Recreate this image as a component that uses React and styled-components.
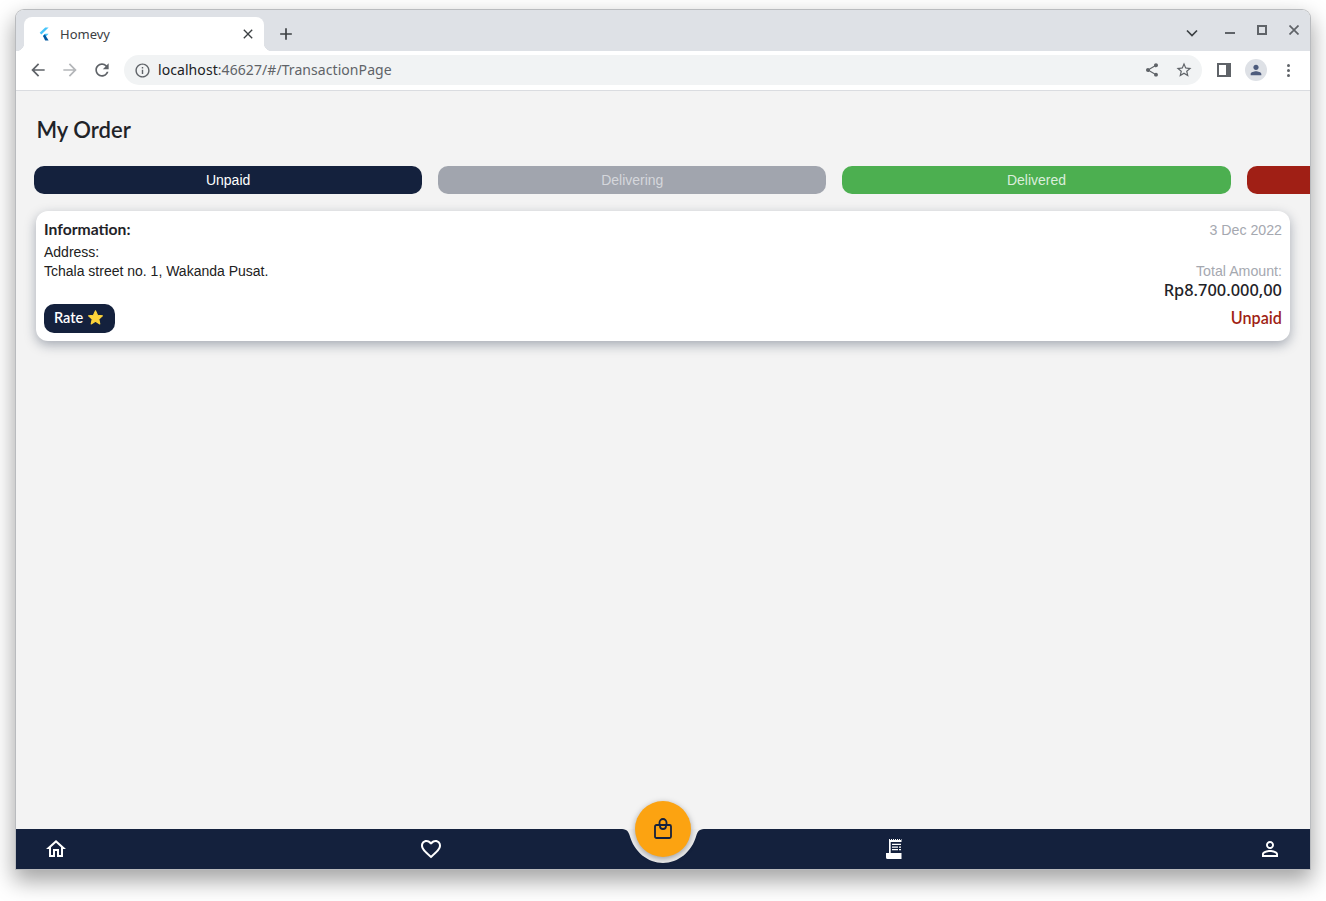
import React from 'react';
import styled, { createGlobalStyle } from 'styled-components';

const GlobalStyle = createGlobalStyle`
  html, body {
    margin: 0;
    padding: 0;
    background: #ffffff;
  }
  * {
    box-sizing: border-box;
  }
`;

const NAVY = '#14213d';
const UI_FONT = '"Noto Sans", sans-serif';
const APP_FONT = '"Liberation Sans", sans-serif';
const HEAD_FONT = 'Lato, sans-serif';

const paths = {
  back: 'M20 11H7.83l5.59-5.59L12 4l-8 8 8 8 1.41-1.41L7.83 13H20v-2z',
  forward: 'M12 4l-1.41 1.41L16.17 11H4v2h12.17l-5.58 5.59L12 20l8-8z',
  reload:
    'M17.65 6.35C16.2 4.9 14.21 4 12 4c-4.42 0-7.99 3.58-7.99 8s3.57 8 7.99 8c3.73 0 6.84-2.55 7.73-6h-2.08c-.82 2.33-3.04 4-5.65 4-3.31 0-6-2.69-6-6s2.69-6 6-6c1.66 0 3.14.69 4.22 1.78L13 11h7V4l-2.35 2.35z',
  info: 'M11 7h2v2h-2zm0 4h2v6h-2zm1-9C6.48 2 2 6.48 2 12s4.48 10 10 10 10-4.48 10-10S17.52 2 12 2zm0 18c-4.41 0-8-3.59-8-8s3.59-8 8-8 8 3.59 8 8-3.59 8-8 8z',
  share:
    'M18 16.08c-.76 0-1.44.3-1.96.77L8.91 12.7c.05-.23.09-.46.09-.7s-.04-.47-.09-.7l7.05-4.11c.54.5 1.25.81 2.04.81 1.66 0 3-1.34 3-3s-1.34-3-3-3-3 1.34-3 3c0 .24.04.47.09.7L8.04 9.81C7.5 9.31 6.79 9 6 9c-1.66 0-3 1.34-3 3s1.34 3 3 3c.79 0 1.5-.31 2.04-.81l7.12 4.16c-.05.21-.08.43-.08.65 0 1.61 1.31 2.92 2.92 2.92s2.92-1.31 2.92-2.92-1.31-2.92-2.92-2.92z',
  star: 'M22 9.24l-7.19-.62L12 2 9.19 8.63 2 9.24l5.46 4.73L5.82 21 12 17.27 18.18 21l-1.63-7.03L22 9.24zM12 15.4l-3.76 2.27 1-4.28-3.32-2.88 4.38-.38L12 6.1l1.71 4.04 4.38.38-3.32 2.88 1 4.28L12 15.4z',
  home: 'M12 5.69l5 4.5V18h-2v-6H9v6H7v-7.81l5-4.5M12 3L2 12h3v8h6v-6h2v6h6v-8h3L12 3z',
  heart:
    'M16.5 3c-1.74 0-3.41.81-4.5 2.09C10.91 3.81 9.24 3 7.5 3 4.42 3 2 5.42 2 8.5c0 3.78 3.4 6.86 8.55 11.54L12 21.35l1.45-1.32C18.6 15.36 22 12.28 22 8.5 22 5.42 19.58 3 16.5 3zm-4.4 15.55l-.1.1-.1-.1C7.14 14.24 4 11.39 4 8.5 4 6.5 5.5 5 7.5 5c1.54 0 3.04.99 3.57 2.36h1.87C13.46 5.99 14.96 5 16.5 5c2 0 3.5 1.5 3.5 3.5 0 2.89-3.14 5.74-7.9 10.05z',
  person:
    'M12 5.9c1.16 0 2.1.94 2.1 2.1s-.94 2.1-2.1 2.1S9.9 9.16 9.9 8s.94-2.1 2.1-2.1m0 9c2.97 0 6.1 1.46 6.1 2.1v1.1H5.9V17c0-.64 3.13-2.1 6.1-2.1M12 4C9.79 4 8 5.79 8 8s1.79 4 4 4 4-1.79 4-4-1.79-4-4-4zm0 9c-2.67 0-8 1.34-8 4v3h16v-3c0-2.66-5.33-4-8-4z',
};

const Icon = ({ d, size = 24, color = 'currentColor' }) => (
  <svg width={size} height={size} viewBox="0 0 24 24" fill={color}>
    <path d={d} />
  </svg>
);

const FlutterLogo = () => (
  <svg width="12" height="14" viewBox="0 0 12 14">
    <path d="M7.2 0.5h3.4L3.4 7.4 1.7 5.8z" fill="#47c5fb" />
    <path d="M10.6 6.8H7.2L4.9 9l1.8 1.8z" fill="#47c5fb" />
    <path d="M5 9l1.8-1.7 3.8 6.2H7.2z" fill="#00569e" />
  </svg>
);

const BagIcon = () => (
  <svg width="24" height="24" viewBox="0 0 24 24" fill="none" stroke={NAVY} strokeWidth="1.8">
    <rect x="4" y="8" width="16" height="13" rx="1.5" />
    <path d="M8.5 8V5.500a3.500 3.500 0 0 1 7 0V8" />
    <path d="M9 9a3 3 0 0 0 6 0" />
  </svg>
);

const ReceiptIcon = () => (
  <svg width="24" height="24" viewBox="0 0 24 24">
    <path
      d="M6 2h1v1h1V2h1v1h1V2h1v1h1V2h1v1h1V2h1v1h1V2h1v1h1V2h.5v20H4.500A1.500 1.500 0 0 1 3 20.500V16h3z"
      fill="#fff"
    />
    <path d="M7.700 5h11.600v11H7.700z" fill={NAVY} />
    <path
      d="M9 6.800h9V8H9zM9 9.500h6v1.200H9zM16 9.500h2v1.200h-2zM9 12h6v1.200H9zM16 12h2v1.200h-2z"
      fill="#fff"
    />
  </svg>
);

const Page = styled.div`
  width: 1326px;
  height: 901px;
  padding: 10px 16px 32px;
  overflow: hidden;
`;

const Window = styled.div`
  height: 859px;
  display: flex;
  flex-direction: column;
  border-radius: 8px 8px 0 0;
  box-shadow: 0 0 0 1px #b9bbbe, 0 10px 22px 2px rgba(0, 0, 0, 0.36);
`;

const TabStrip = styled.div`
  height: 41px;
  flex: none;
  display: flex;
  align-items: flex-end;
  padding-left: 8px;
  background: #dee1e6;
  border-radius: 8px 8px 0 0;
`;

const Tab = styled.div`
  position: relative;
  width: 240px;
  height: 34px;
  display: flex;
  align-items: center;
  padding: 0 8px 0 14px;
  background: #ffffff;
  border-radius: 8px 8px 0 0;
  color: #3c4043;
  font: 13px/34px ${UI_FONT};

  &::before,
  &::after {
    content: '';
    position: absolute;
    bottom: 0;
    width: 8px;
    height: 8px;
  }
  &::before {
    left: -8px;
    background: radial-gradient(circle at 0 0, transparent 8px, #ffffff 8.5px);
  }
  &::after {
    right: -8px;
    background: radial-gradient(circle at 100% 0, transparent 8px, #ffffff 8.5px);
  }
`;

const TabTitle = styled.span`
  flex: 1;
  margin-left: 10px;
`;

const TabClose = styled.span`
  display: flex;
  color: #3c4043;
`;

const NewTab = styled.div`
  width: 28px;
  height: 34px;
  margin-left: 8px;
  display: flex;
  align-items: center;
  justify-content: center;
  color: #3c4043;
`;

const Spacer = styled.div`
  flex: 1;
`;

const CaptionButton = styled.div`
  width: 32px;
  height: 28px;
  align-self: flex-start;
  margin-top: ${(p) => p.$top || 6}px;
  margin-right: ${(p) => p.$right || 0}px;
  display: flex;
  align-items: center;
  justify-content: center;
`;

const Toolbar = styled.div`
  height: 40px;
  flex: none;
  display: flex;
  align-items: center;
  padding: 0 6px 1px;
  background: #ffffff;
  border-bottom: 1px solid #dadce0;
`;

const ToolButton = styled.div`
  width: 32px;
  height: 32px;
  display: flex;
  align-items: center;
  justify-content: center;
  color: ${(p) => p.$color || '#5f6368'};
`;

const Omnibox = styled.div`
  flex: 1;
  height: 30px;
  margin: 0 6px;
  display: flex;
  align-items: center;
  padding: 0 2px 0 10px;
  background: #f1f3f4;
  border-radius: 15px;
`;

const InfoSlot = styled.span`
  display: flex;
  color: #5f6368;
  margin-right: 7px;
`;

const Url = styled.div`
  flex: 1;
  color: #5f6368;
  font: 14px/30px ${UI_FONT};
  letter-spacing: 0.07px;
`;

const UrlHost = styled.span`
  color: #202124;
`;

const SidePanelIcon = styled.div`
  width: 14px;
  height: 14px;
  border: 2px solid #5f6368;
  border-right-width: 5px;
`;

const Avatar = styled.div`
  width: 22px;
  height: 22px;
  border-radius: 50%;
  background: #dee1e6;
  display: flex;
  align-items: center;
  justify-content: center;
`;

const Dots = styled.div`
  display: flex;
  flex-direction: column;
  gap: 2px;
  span {
    width: 3px;
    height: 3px;
    border-radius: 50%;
    background: #5f6368;
  }
`;

const Content = styled.main`
  flex: 1;
  min-height: 0;
  display: flex;
  flex-direction: column;
  background: #f3f3f3;
  overflow: hidden;
`;

const Title = styled.h1`
  margin: 24px 0 0 20.5px;
  height: 30px;
  color: #1f2328;
  font: 600 22px/30px ${HEAD_FONT};
`;

const Filters = styled.div`
  display: flex;
  gap: 16px;
  margin: 21px 0 0 18px;
  overflow: hidden;
`;

const Filter = styled.div`
  flex: 0 0 388.2px;
  height: 28px;
  border-radius: 10px;
  background: ${(p) => p.$bg};
  color: ${(p) => p.$color || '#e6e8ec'};
  text-align: center;
  font: 14px/28px ${APP_FONT};
`;

const Card = styled.section`
  margin: 17px 20px 0;
  height: 130px;
  padding: 8px;
  display: flex;
  justify-content: space-between;
  background: #ffffff;
  border-radius: 12px;
  box-shadow: 0 4px 12px rgba(20, 33, 61, 0.35);
`;

const Column = styled.div`
  display: flex;
  flex-direction: column;
  align-items: ${(p) => (p.$right ? 'flex-end' : 'flex-start')};
  text-align: ${(p) => (p.$right ? 'right' : 'left')};
`;

const InfoTitle = styled.div`
  color: #1f2328;
  font: 700 15.7px/20px ${HEAD_FONT};
`;

const BodyText = styled.div`
  margin-top: ${(p) => p.$top || 0}px;
  color: #212121;
  font: 14px/19px ${APP_FONT};
`;

const Muted = styled.div`
  margin-top: ${(p) => p.$top || 0}px;
  color: #a5a8b0;
  font: 14.2px/20px ${APP_FONT};
`;

const Amount = styled.div`
  color: #1f2328;
  font: 500 16.4px/18px ${UI_FONT};
`;

const Status = styled.div`
  margin-top: auto;
  color: #a01f15;
  font: 600 16.2px/30px ${HEAD_FONT};
`;

const RateButton = styled.button`
  margin-top: auto;
  height: 29px;
  width: 71px;
  padding: 0 1px 2px 0;
  display: flex;
  align-items: center;
  justify-content: center;
  gap: 4px;
  border: 0;
  border-radius: 10px;
  background: ${NAVY};
  color: #ffffff;
  font: 600 14.5px/27px ${HEAD_FONT};
`;

const BottomBar = styled.nav`
  position: relative;
  height: 40px;
  flex: none;
  display: flex;
  justify-content: space-between;
  padding: 0 28px;
  background: ${NAVY};
`;

const NavGroup = styled.div`
  width: 399px;
  display: flex;
  align-items: center;
  justify-content: space-between;
  color: #ffffff;
`;

const Notch = styled.svg`
  position: absolute;
  left: 600px;
  top: 0;
`;

const Fab = styled.button`
  position: absolute;
  left: 619px;
  top: -28px;
  width: 56px;
  height: 56px;
  padding: 0;
  display: flex;
  align-items: center;
  justify-content: center;
  border: 0;
  border-radius: 50%;
  background: #fca311;
  box-shadow: 0 2px 6px rgba(0, 0, 0, 0.35);
`;

const App = () => (
  <Page>
    <GlobalStyle />
    <Window>
      <TabStrip>
        <Tab>
          <FlutterLogo />
          <TabTitle>Homevy</TabTitle>
          <TabClose>
            <Icon
              size={16}
              d="M19 6.41L17.59 5 12 10.59 6.41 5 5 6.41 10.59 12 5 17.59 6.41 19 12 13.41 17.59 19 19 17.59 13.41 12z"
            />
          </TabClose>
        </Tab>
        <NewTab>
          <Icon size={20} d="M19 13h-6v6h-2v-6H5v-2h6V5h2v6h6v2z" />
        </NewTab>
        <Spacer />
        <CaptionButton $right={6} $top={9}>
          <svg width="12" height="8" viewBox="0 0 12 8" fill="none" stroke="#3c4043" strokeWidth="1.7">
            <path d="M1 1.5l5 5 5-5" />
          </svg>
        </CaptionButton>
        <CaptionButton $top={9}>
          <svg width="10" height="2" viewBox="0 0 10 2">
            <path d="M0 0h10v2H0z" fill="#5f6368" />
          </svg>
        </CaptionButton>
        <CaptionButton $top={6}>
          <svg width="10" height="10" viewBox="0 0 10 10" fill="none" stroke="#5f6368" strokeWidth="2">
            <path d="M1 1h8v8H1z" />
          </svg>
        </CaptionButton>
        <CaptionButton $top={6}>
          <svg width="10" height="10" viewBox="0 0 10 10" fill="none" stroke="#5f6368" strokeWidth="1.7">
            <path d="M.5.5l9 9M9.5.5l-9 9" />
          </svg>
        </CaptionButton>
      </TabStrip>
      <Toolbar>
        <ToolButton>
          <Icon d={paths.back} size={20} />
        </ToolButton>
        <ToolButton $color="#b4b6b9">
          <Icon d={paths.forward} size={20} />
        </ToolButton>
        <ToolButton>
          <Icon d={paths.reload} size={20} />
        </ToolButton>
        <Omnibox>
          <InfoSlot>
            <Icon d={paths.info} size={17} />
          </InfoSlot>
          <Url>
            <UrlHost>localhost</UrlHost>:46627/#/TransactionPage
          </Url>
          <ToolButton>
            <Icon d={paths.share} size={16} />
          </ToolButton>
          <ToolButton>
            <Icon d={paths.star} size={18} />
          </ToolButton>
        </Omnibox>
        <ToolButton>
          <SidePanelIcon />
        </ToolButton>
        <ToolButton>
          <Avatar>
            <Icon
              size={16}
              color="#4d5b7c"
              d="M12 12c2.21 0 4-1.79 4-4s-1.79-4-4-4-4 1.79-4 4 1.79 4 4 4zm0 2c-2.67 0-8 1.34-8 4v2h16v-2c0-2.66-5.33-4-8-4z"
            />
          </Avatar>
        </ToolButton>
        <ToolButton>
          <Dots>
            <span />
            <span />
            <span />
          </Dots>
        </ToolButton>
      </Toolbar>
      <Content>
        <Title>My Order</Title>
        <Filters>
          <Filter $bg={NAVY} $color="#ffffff">
            Unpaid
          </Filter>
          <Filter $bg="#a1a5ae" $color="#d5d7dc">
            Delivering
          </Filter>
          <Filter $bg="#4caf50" $color="#dbeedc">
            Delivered
          </Filter>
          <Filter $bg="#a01f15" />
        </Filters>
        <Card>
          <Column>
            <InfoTitle>Information:</InfoTitle>
            <BodyText $top={4}>Address:</BodyText>
            <BodyText>Tchala street no. 1, Wakanda Pusat.</BodyText>
            <RateButton>
              Rate
              <svg width="17" height="17" viewBox="0 0 24 24">
                <path
                  d="M12 2.500l2.900 6.300 6.900.8-5.100 4.700 1.400 6.800L12 17.200l-6.100 3.900 1.400-6.800-5.100-4.700 6.900-.8z"
                  fill="#fcd33a"
                  stroke="#fcd33a"
                  strokeWidth="1.500"
                  strokeLinejoin="round"
                />
              </svg>
            </RateButton>
          </Column>
          <Column $right>
            <Muted $top={1}>3 Dec 2022</Muted>
            <Muted $top={21}>Total Amount:</Muted>
            <Amount>Rp8.700.000,00</Amount>
            <Status>Unpaid</Status>
          </Column>
        </Card>
      </Content>
      <BottomBar>
        <NavGroup>
          <Icon d={paths.home} />
          <Icon d={paths.heart} />
        </NavGroup>
        <NavGroup>
          <ReceiptIcon />
          <Icon d={paths.person} />
        </NavGroup>
        <Notch width="94" height="40" viewBox="0 0 94 40">
          <path
            d="M4 0C10 0 12 1.500 13.500 6C18 23 32 34 47 34C62 34 76 23 80.500 6C82 1.500 84 0 90 0z"
            fill="#efefef"
          />
        </Notch>
        <Fab>
          <BagIcon />
        </Fab>
      </BottomBar>
    </Window>
  </Page>
);

export default App;
